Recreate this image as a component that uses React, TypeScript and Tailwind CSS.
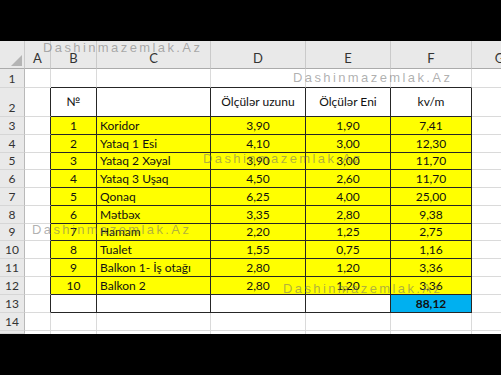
import React from 'react';

// widths of: row header, A, B, C, D, E, F, G
const colW = ['w-[25px]', 'w-[26px]', 'w-[46px]', 'w-[114px]', 'w-[95px]', 'w-[85px]', 'w-[81px]', 'w-[56px]'];
const letters = ['', 'A', 'B', 'C', 'D', 'E', 'F', 'G'];

const rooms = [
  ['1', 'Koridor', '3,90', '1,90', '7,41'],
  ['2', 'Yataq 1 Esi', '4,10', '3,00', '12,30'],
  ['3', 'Yataq 2 Xəyal', '3,90', '3,00', '11,70'],
  ['4', 'Yataq 3 Uşaq', '4,50', '2,60', '11,70'],
  ['5', 'Qonaq', '6,25', '4,00', '25,00'],
  ['6', 'Mətbəx', '3,35', '2,80', '9,38'],
  ['7', 'Hamam', '2,20', '1,25', '2,75'],
  ['8', 'Tualet', '1,55', '0,75', '1,16'],
  ['9', 'Balkon 1- İş otağı', '2,80', '1,20', '3,36'],
  ['10', 'Balkon 2', '2,80', '1,20', '3,36'],
];

const rowH: Record<number, string> = {
  1: 'h-[19px]',
  2: 'h-[29px]',
  3: 'h-[18px]',
  4: 'h-[18px]',
  5: 'h-[17px]',
  6: 'h-[18px]',
  7: 'h-[18px]',
  8: 'h-[18px]',
  9: 'h-[17px]',
  10: 'h-[18px]',
  11: 'h-[18px]',
  12: 'h-[18px]',
  13: 'h-[18px]',
  14: 'h-[18px]',
  15: 'h-[3px]',
};

function contentFor(r: number, c: number): React.ReactNode {
  if (r === 2) {
    if (c === 2) return '№';
    if (c === 4) return 'Ölçülər uzunu';
    if (c === 5) return 'Ölçülər Eni';
    if (c === 6) return 'kv/m';
    return null;
  }
  if (r >= 3 && r <= 12) {
    const row = rooms[r - 3];
    if (c >= 2 && c <= 6) return row[c - 2];
  }
  if (r === 13 && c === 6) return '88,12';
  return null;
}

function Cell({ r, c }: { r: number; c: number }) {
  if (c === 0) {
    return (
      <div
        className={`${colW[0]} shrink-0 flex items-end justify-center bg-[#e9e9e9] border-r border-b border-r-[#b9b9b9] border-b-[#d6d6d6] text-[#333] leading-[15px] pb-[1px] overflow-hidden`}
      >
        {r <= 14 ? r : null}
      </div>
    );
  }
  const inTable = c >= 2 && c <= 6;
  const darkRight = r >= 2 && r <= 13 && c >= 1 && c <= 6;
  const darkBottom = r >= 1 && r <= 13 && inTable;
  const yellow = r >= 3 && r <= 12 && inTable;
  const blue = r === 13 && c === 6;
  const content = contentFor(r, c);
  return (
    <div
      className={[
        colW[c],
        'shrink-0 flex items-center overflow-hidden whitespace-nowrap',
        r === 15 ? 'border-r' : 'border-r border-b',
        darkRight ? 'border-r-[#262626]' : 'border-r-[#dadada]',
        darkBottom ? 'border-b-[#262626]' : 'border-b-[#dadada]',
        yellow ? 'bg-[#ffff00]' : blue ? 'bg-[#00b0f0] font-bold' : 'bg-white',
        c === 3 ? 'justify-start pl-[3px]' : 'justify-center',
      ].join(' ')}
    >
      {content}
    </div>
  );
}

const marks = [
  'left-[43px] top-[0px]',
  'left-[293px] top-[30px]',
  'left-[203px] top-[111px]',
  'left-[32px] top-[182px]',
  'left-[283px] top-[241px]',
];

export default function App() {
  const rows = [1, 2, 3, 4, 5, 6, 7, 8, 9, 10, 11, 12, 13, 14, 15];
  return (
    <div className="w-[501px] h-[375px] overflow-hidden flex flex-col bg-black font-['Lato',sans-serif] text-[12px] text-[#111]">
      <div className="h-[41px] shrink-0 bg-black" />

      {/* sheet */}
      <div className="relative shrink-0 bg-white overflow-hidden">
        {/* column headers */}
        <div className="flex h-[28px]">
          {letters.map((l, i) => (
            <div
              key={i}
              className={`${colW[i]} shrink-0 relative flex items-end justify-center pb-[2px] bg-[#e9e9e9] border-r border-b border-r-[#cacaca] border-b-[#ababab] text-[#333] text-[13px] leading-[15px]`}
            >
              {i === 0 ? (
                <div className="absolute right-[2px] bottom-[2px] w-0 h-0 border-l-[11px] border-t-[11px] border-l-transparent border-t-transparent border-r-0 border-b-0 border-solid" style={{ borderRight: '11px solid #b4b4b4', borderLeft: '0', borderTop: '11px solid transparent' }} />
              ) : (
                l
              )}
            </div>
          ))}
        </div>

        {rows.map((r) => (
          <div key={r} className={`flex ${rowH[r]}`}>
            {[0, 1, 2, 3, 4, 5, 6, 7].map((c) => (
              <Cell key={c} r={r} c={c} />
            ))}
          </div>
        ))}

        {/* watermarks */}
        {marks.map((m, i) => (
          <div
            key={i}
            className={`absolute ${m} font-['Liberation_Sans',Arial,sans-serif] text-[13px] leading-none tracking-[2.4px] text-[rgba(110,110,110,0.55)] whitespace-nowrap pointer-events-none`}
          >
            Dashinmazemlak.Az
          </div>
        ))}
      </div>

      <div className="flex-1 bg-black" />
    </div>
  );
}
